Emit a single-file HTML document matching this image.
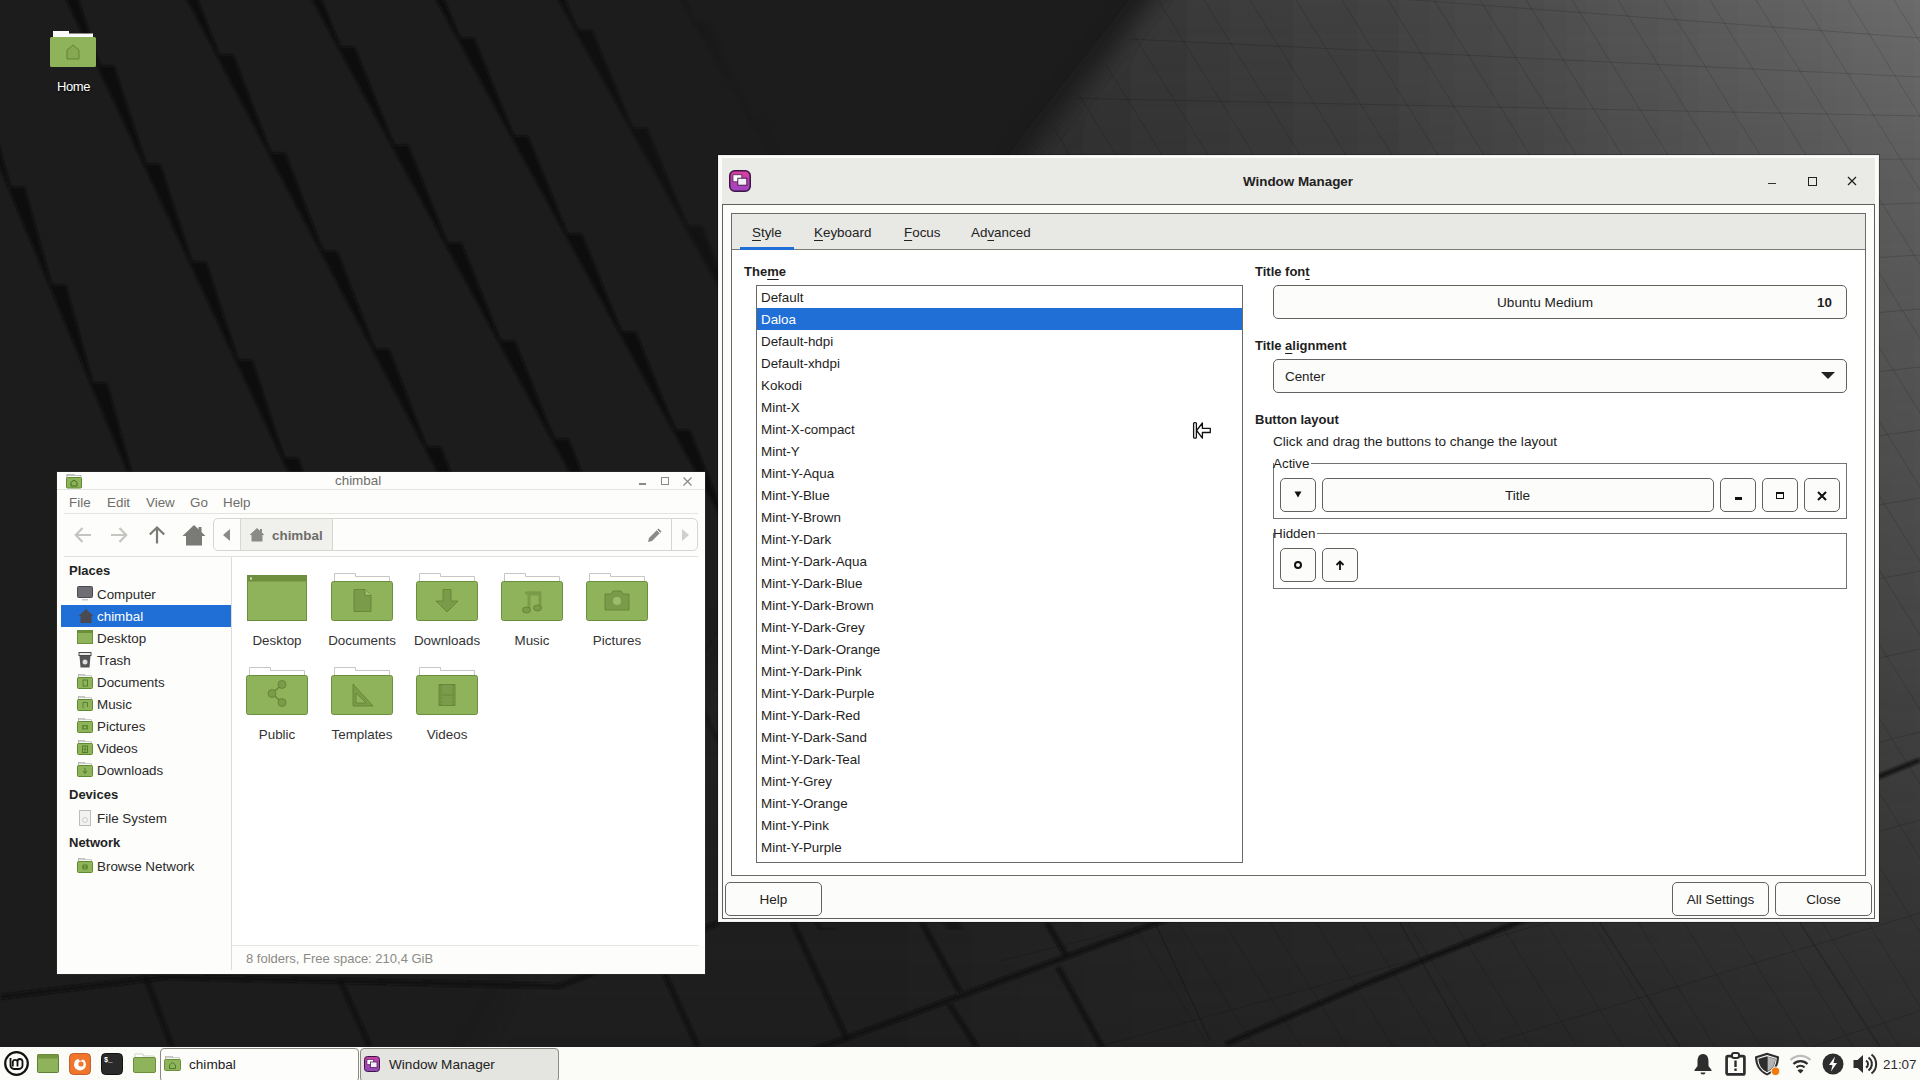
<!DOCTYPE html>
<html><head><meta charset="utf-8">
<style>
*{box-sizing:border-box;margin:0;padding:0}
html,body{width:1920px;height:1080px;overflow:hidden}
body{position:relative;background:#1c1c1c;font-family:"Liberation Sans",sans-serif;font-size:13.5px;color:#1e1e1e}
.a{position:absolute}
.t{position:absolute;white-space:nowrap;line-height:16px;margin-top:1px}
svg.i{position:absolute;overflow:visible}
#wall{position:absolute;left:0;top:0}
.btn{position:absolute;border:1px solid #62625e;border-radius:5px;background:#fcfcfa;text-align:center;line-height:34px;color:#222}
.lbl{font-weight:bold;font-size:13px}
.u{text-decoration:underline;text-decoration-thickness:1px;text-underline-offset:3px}
.row{position:absolute;left:757px;width:485px;height:22px;line-height:22px;padding-left:4px;padding-top:1px;font-size:13.4px}
.sel{background:#1f6fd6;color:#fff}
.frame{position:absolute;border:1px solid #72726e}
.sb{position:absolute;left:97px;font-size:13.4px;color:#2a2a2a;line-height:16px;margin-top:0.5px}
.sbh{position:absolute;left:69px;font-size:13px;font-weight:bold;color:#222;line-height:16px}
.fl{position:absolute;width:80px;text-align:center;font-size:13.4px;color:#333;line-height:16px;margin-top:1px}
</style></head><body>

<svg id="wall" width="1920" height="1080" viewBox="0 0 1920 1080">
<defs>
<linearGradient id="hg" gradientUnits="userSpaceOnUse" x1="900" y1="0" x2="1920" y2="0">
<stop offset="0" stop-color="#282828"/>
<stop offset="0.25" stop-color="#383838"/>
<stop offset="0.5" stop-color="#444444"/>
<stop offset="1" stop-color="#6c6c6c"/>
</linearGradient>
<linearGradient id="vg" gradientUnits="userSpaceOnUse" x1="0" y1="0" x2="0" y2="1047">
<stop offset="0" stop-color="#fff" stop-opacity="1"/>
<stop offset="0.15" stop-color="#fff" stop-opacity="0.85"/>
<stop offset="0.57" stop-color="#fff" stop-opacity="0.55"/>
<stop offset="0.95" stop-color="#fff" stop-opacity="0.25"/>
<stop offset="1" stop-color="#fff" stop-opacity="0.22"/>
</linearGradient>
<mask id="vm" maskUnits="userSpaceOnUse" x="0" y="0" width="1920" height="1080"><rect width="1920" height="1080" fill="url(#vg)"/></mask>
<filter id="bl" x="-5%" y="-5%" width="110%" height="110%"><feGaussianBlur stdDeviation="12"/></filter>
</defs>
<rect width="1920" height="1080" fill="#1c1c1c"/><filter id="pb"><feGaussianBlur stdDeviation="1"/></filter><linearGradient id="pfg" gradientUnits="userSpaceOnUse" x1="540" y1="0" x2="700" y2="-62"><stop offset="0" stop-color="#fff"/><stop offset="1" stop-color="#000"/></linearGradient><mask id="pm" maskUnits="userSpaceOnUse" x="0" y="0" width="1920" height="1080"><rect width="1920" height="930" fill="url(#pfg)"/></mask><g mask="url(#pm)"><g filter="url(#pb)"><polygon points="-155.1,-205 -140.1,-205 -112.9,-107 -113.9,-107" fill="#0d0d0d"/><line x1="-155.1" y1="-205" x2="-113.9" y2="-107" stroke="#0f0f0f" stroke-width="3"/><polygon points="-113.9,-107 -98.9,-107 -71.8,-9 -72.8,-9" fill="#0d0d0d"/><line x1="-113.9" y1="-107" x2="-72.8" y2="-9" stroke="#0f0f0f" stroke-width="3"/><polygon points="-72.8,-9 -57.8,-9 -30.6,89 -31.6,89" fill="#0d0d0d"/><line x1="-72.8" y1="-9" x2="-31.6" y2="89" stroke="#0f0f0f" stroke-width="3"/><polygon points="-31.6,89 -16.6,89 10.5,187 9.5,187" fill="#0d0d0d"/><line x1="-31.6" y1="89" x2="9.5" y2="187" stroke="#0f0f0f" stroke-width="3"/><polygon points="9.5,187 24.5,187 51.7,285 50.7,285" fill="#0d0d0d"/><line x1="9.5" y1="187" x2="50.7" y2="285" stroke="#0f0f0f" stroke-width="3"/><polygon points="50.7,285 65.7,285 92.9,383 91.9,383" fill="#0d0d0d"/><line x1="50.7" y1="285" x2="91.9" y2="383" stroke="#0f0f0f" stroke-width="3"/><polygon points="91.9,383 106.9,383 134.0,481 133.0,481" fill="#0d0d0d"/><line x1="91.9" y1="383" x2="133.0" y2="481" stroke="#0f0f0f" stroke-width="3"/><polygon points="133.0,481 148.0,481 175.2,579 174.2,579" fill="#0d0d0d"/><line x1="133.0" y1="481" x2="174.2" y2="579" stroke="#0f0f0f" stroke-width="3"/><polygon points="174.2,579 189.2,579 216.3,677 215.3,677" fill="#0d0d0d"/><line x1="174.2" y1="579" x2="215.3" y2="677" stroke="#0f0f0f" stroke-width="3"/><polygon points="215.3,677 230.3,677 257.5,775 256.5,775" fill="#0d0d0d"/><line x1="215.3" y1="677" x2="256.5" y2="775" stroke="#0f0f0f" stroke-width="3"/><polygon points="256.5,775 271.5,775 298.7,873 297.7,873" fill="#0d0d0d"/><line x1="256.5" y1="775" x2="297.7" y2="873" stroke="#0f0f0f" stroke-width="3"/><polygon points="297.7,873 312.7,873 339.8,971 338.8,971" fill="#0d0d0d"/><line x1="297.7" y1="873" x2="338.8" y2="971" stroke="#0f0f0f" stroke-width="3"/><polygon points="338.8,971 353.8,971 381.0,1069 380.0,1069" fill="#0d0d0d"/><line x1="338.8" y1="971" x2="380.0" y2="1069" stroke="#0f0f0f" stroke-width="3"/><polygon points="380.0,1069 395.0,1069 422.1,1167 421.1,1167" fill="#0d0d0d"/><line x1="380.0" y1="1069" x2="421.1" y2="1167" stroke="#0f0f0f" stroke-width="3"/><polygon points="-39.2,-228 -24.2,-228 7.9,-130 6.9,-130" fill="#0d0d0d"/><line x1="-39.2" y1="-228" x2="6.9" y2="-130" stroke="#0f0f0f" stroke-width="3"/><polygon points="6.9,-130 21.9,-130 54.0,-32 53.0,-32" fill="#0d0d0d"/><line x1="6.9" y1="-130" x2="53.0" y2="-32" stroke="#0f0f0f" stroke-width="3"/><polygon points="53.0,-32 68.0,-32 100.0,66 99.0,66" fill="#0d0d0d"/><line x1="53.0" y1="-32" x2="99.0" y2="66" stroke="#0f0f0f" stroke-width="3"/><polygon points="99.0,66 114.0,66 146.1,164 145.1,164" fill="#0d0d0d"/><line x1="99.0" y1="66" x2="145.1" y2="164" stroke="#0f0f0f" stroke-width="3"/><polygon points="145.1,164 160.1,164 192.1,262 191.1,262" fill="#0d0d0d"/><line x1="145.1" y1="164" x2="191.1" y2="262" stroke="#0f0f0f" stroke-width="3"/><polygon points="191.1,262 206.1,262 238.2,360 237.2,360" fill="#0d0d0d"/><line x1="191.1" y1="262" x2="237.2" y2="360" stroke="#0f0f0f" stroke-width="3"/><polygon points="237.2,360 252.2,360 284.3,458 283.3,458" fill="#0d0d0d"/><line x1="237.2" y1="360" x2="283.3" y2="458" stroke="#0f0f0f" stroke-width="3"/><polygon points="283.3,458 298.3,458 330.3,556 329.3,556" fill="#0d0d0d"/><line x1="283.3" y1="458" x2="329.3" y2="556" stroke="#0f0f0f" stroke-width="3"/><polygon points="329.3,556 344.3,556 376.4,654 375.4,654" fill="#0d0d0d"/><line x1="329.3" y1="556" x2="375.4" y2="654" stroke="#0f0f0f" stroke-width="3"/><polygon points="375.4,654 390.4,654 422.4,752 421.4,752" fill="#0d0d0d"/><line x1="375.4" y1="654" x2="421.4" y2="752" stroke="#0f0f0f" stroke-width="3"/><polygon points="421.4,752 436.4,752 468.5,850 467.5,850" fill="#0d0d0d"/><line x1="421.4" y1="752" x2="467.5" y2="850" stroke="#0f0f0f" stroke-width="3"/><polygon points="467.5,850 482.5,850 514.6,948 513.6,948" fill="#0d0d0d"/><line x1="467.5" y1="850" x2="513.6" y2="948" stroke="#0f0f0f" stroke-width="3"/><polygon points="513.6,948 528.6,948 560.6,1046 559.6,1046" fill="#0d0d0d"/><line x1="513.6" y1="948" x2="559.6" y2="1046" stroke="#0f0f0f" stroke-width="3"/><polygon points="559.6,1046 574.6,1046 606.7,1144 605.7,1144" fill="#0d0d0d"/><line x1="559.6" y1="1046" x2="605.7" y2="1144" stroke="#0f0f0f" stroke-width="3"/><polygon points="62.3,-239 77.3,-239 115.3,-141 114.3,-141" fill="#0d0d0d"/><line x1="62.3" y1="-239" x2="114.3" y2="-141" stroke="#0f0f0f" stroke-width="3"/><polygon points="114.3,-141 129.3,-141 167.2,-43 166.2,-43" fill="#0d0d0d"/><line x1="114.3" y1="-141" x2="166.2" y2="-43" stroke="#0f0f0f" stroke-width="3"/><polygon points="166.2,-43 181.2,-43 219.2,55 218.2,55" fill="#0d0d0d"/><line x1="166.2" y1="-43" x2="218.2" y2="55" stroke="#0f0f0f" stroke-width="3"/><polygon points="218.2,55 233.2,55 271.1,153 270.1,153" fill="#0d0d0d"/><line x1="218.2" y1="55" x2="270.1" y2="153" stroke="#0f0f0f" stroke-width="3"/><polygon points="270.1,153 285.1,153 323.0,251 322.0,251" fill="#0d0d0d"/><line x1="270.1" y1="153" x2="322.0" y2="251" stroke="#0f0f0f" stroke-width="3"/><polygon points="322.0,251 337.0,251 375.0,349 374.0,349" fill="#0d0d0d"/><line x1="322.0" y1="251" x2="374.0" y2="349" stroke="#0f0f0f" stroke-width="3"/><polygon points="374.0,349 389.0,349 426.9,447 425.9,447" fill="#0d0d0d"/><line x1="374.0" y1="349" x2="425.9" y2="447" stroke="#0f0f0f" stroke-width="3"/><polygon points="425.9,447 440.9,447 478.9,545 477.9,545" fill="#0d0d0d"/><line x1="425.9" y1="447" x2="477.9" y2="545" stroke="#0f0f0f" stroke-width="3"/><polygon points="477.9,545 492.9,545 530.8,643 529.8,643" fill="#0d0d0d"/><line x1="477.9" y1="545" x2="529.8" y2="643" stroke="#0f0f0f" stroke-width="3"/><polygon points="529.8,643 544.8,643 582.7,741 581.7,741" fill="#0d0d0d"/><line x1="529.8" y1="643" x2="581.7" y2="741" stroke="#0f0f0f" stroke-width="3"/><polygon points="581.7,741 596.7,741 634.7,839 633.7,839" fill="#0d0d0d"/><line x1="581.7" y1="741" x2="633.7" y2="839" stroke="#0f0f0f" stroke-width="3"/><polygon points="633.7,839 648.7,839 686.6,937 685.6,937" fill="#0d0d0d"/><line x1="633.7" y1="839" x2="685.6" y2="937" stroke="#0f0f0f" stroke-width="3"/><polygon points="685.6,937 700.6,937 738.6,1035 737.6,1035" fill="#0d0d0d"/><line x1="685.6" y1="937" x2="737.6" y2="1035" stroke="#0f0f0f" stroke-width="3"/><polygon points="737.6,1035 752.6,1035 790.5,1133 789.5,1133" fill="#0d0d0d"/><line x1="737.6" y1="1035" x2="789.5" y2="1133" stroke="#0f0f0f" stroke-width="3"/><polygon points="179.4,-247 194.4,-247 233.8,-149 232.8,-149" fill="#0d0d0d"/><line x1="179.4" y1="-247" x2="232.8" y2="-149" stroke="#0f0f0f" stroke-width="3"/><polygon points="232.8,-149 247.8,-149 287.2,-51 286.2,-51" fill="#0d0d0d"/><line x1="232.8" y1="-149" x2="286.2" y2="-51" stroke="#0f0f0f" stroke-width="3"/><polygon points="286.2,-51 301.2,-51 340.6,47 339.6,47" fill="#0d0d0d"/><line x1="286.2" y1="-51" x2="339.6" y2="47" stroke="#0f0f0f" stroke-width="3"/><polygon points="339.6,47 354.6,47 394.0,145 393.0,145" fill="#0d0d0d"/><line x1="339.6" y1="47" x2="393.0" y2="145" stroke="#0f0f0f" stroke-width="3"/><polygon points="393.0,145 408.0,145 447.4,243 446.4,243" fill="#0d0d0d"/><line x1="393.0" y1="145" x2="446.4" y2="243" stroke="#0f0f0f" stroke-width="3"/><polygon points="446.4,243 461.4,243 500.8,341 499.8,341" fill="#0d0d0d"/><line x1="446.4" y1="243" x2="499.8" y2="341" stroke="#0f0f0f" stroke-width="3"/><polygon points="499.8,341 514.8,341 554.3,439 553.3,439" fill="#0d0d0d"/><line x1="499.8" y1="341" x2="553.3" y2="439" stroke="#0f0f0f" stroke-width="3"/><polygon points="553.3,439 568.3,439 607.7,537 606.7,537" fill="#0d0d0d"/><line x1="553.3" y1="439" x2="606.7" y2="537" stroke="#0f0f0f" stroke-width="3"/><polygon points="606.7,537 621.7,537 661.1,635 660.1,635" fill="#0d0d0d"/><line x1="606.7" y1="537" x2="660.1" y2="635" stroke="#0f0f0f" stroke-width="3"/><polygon points="660.1,635 675.1,635 714.5,733 713.5,733" fill="#0d0d0d"/><line x1="660.1" y1="635" x2="713.5" y2="733" stroke="#0f0f0f" stroke-width="3"/><polygon points="713.5,733 728.5,733 767.9,831 766.9,831" fill="#0d0d0d"/><line x1="713.5" y1="733" x2="766.9" y2="831" stroke="#0f0f0f" stroke-width="3"/><polygon points="766.9,831 781.9,831 821.3,929 820.3,929" fill="#0d0d0d"/><line x1="766.9" y1="831" x2="820.3" y2="929" stroke="#0f0f0f" stroke-width="3"/><polygon points="820.3,929 835.3,929 874.7,1027 873.7,1027" fill="#0d0d0d"/><line x1="820.3" y1="929" x2="873.7" y2="1027" stroke="#0f0f0f" stroke-width="3"/><polygon points="873.7,1027 888.7,1027 928.1,1125 927.1,1125" fill="#0d0d0d"/><line x1="873.7" y1="1027" x2="927.1" y2="1125" stroke="#0f0f0f" stroke-width="3"/><polygon points="297.2,-256 312.2,-256 352.1,-158 351.1,-158" fill="#0d0d0d"/><line x1="297.2" y1="-256" x2="351.1" y2="-158" stroke="#0f0f0f" stroke-width="3"/><polygon points="351.1,-158 366.1,-158 406.0,-60 405.0,-60" fill="#0d0d0d"/><line x1="351.1" y1="-158" x2="405.0" y2="-60" stroke="#0f0f0f" stroke-width="3"/><polygon points="405.0,-60 420.0,-60 459.9,38 458.9,38" fill="#0d0d0d"/><line x1="405.0" y1="-60" x2="458.9" y2="38" stroke="#0f0f0f" stroke-width="3"/><polygon points="458.9,38 473.9,38 513.8,136 512.8,136" fill="#0d0d0d"/><line x1="458.9" y1="38" x2="512.8" y2="136" stroke="#0f0f0f" stroke-width="3"/><polygon points="512.8,136 527.8,136 567.7,234 566.7,234" fill="#0d0d0d"/><line x1="512.8" y1="136" x2="566.7" y2="234" stroke="#0f0f0f" stroke-width="3"/><polygon points="566.7,234 581.7,234 621.6,332 620.6,332" fill="#0d0d0d"/><line x1="566.7" y1="234" x2="620.6" y2="332" stroke="#0f0f0f" stroke-width="3"/><polygon points="620.6,332 635.6,332 675.5,430 674.5,430" fill="#0d0d0d"/><line x1="620.6" y1="332" x2="674.5" y2="430" stroke="#0f0f0f" stroke-width="3"/><polygon points="674.5,430 689.5,430 729.4,528 728.4,528" fill="#0d0d0d"/><line x1="674.5" y1="430" x2="728.4" y2="528" stroke="#0f0f0f" stroke-width="3"/><polygon points="728.4,528 743.4,528 783.3,626 782.3,626" fill="#0d0d0d"/><line x1="728.4" y1="528" x2="782.3" y2="626" stroke="#0f0f0f" stroke-width="3"/><polygon points="782.3,626 797.3,626 837.2,724 836.2,724" fill="#0d0d0d"/><line x1="782.3" y1="626" x2="836.2" y2="724" stroke="#0f0f0f" stroke-width="3"/><polygon points="836.2,724 851.2,724 891.1,822 890.1,822" fill="#0d0d0d"/><line x1="836.2" y1="724" x2="890.1" y2="822" stroke="#0f0f0f" stroke-width="3"/><polygon points="890.1,822 905.1,822 945.0,920 944.0,920" fill="#0d0d0d"/><line x1="890.1" y1="822" x2="944.0" y2="920" stroke="#0f0f0f" stroke-width="3"/><polygon points="944.0,920 959.0,920 998.9,1018 997.9,1018" fill="#0d0d0d"/><line x1="944.0" y1="920" x2="997.9" y2="1018" stroke="#0f0f0f" stroke-width="3"/><polygon points="997.9,1018 1012.9,1018 1052.8,1116 1051.8,1116" fill="#0d0d0d"/><line x1="997.9" y1="1018" x2="1051.8" y2="1116" stroke="#0f0f0f" stroke-width="3"/><polygon points="412.2,-264 427.2,-264 468.0,-166 467.0,-166" fill="#0d0d0d"/><line x1="412.2" y1="-264" x2="467.0" y2="-166" stroke="#0f0f0f" stroke-width="3"/><polygon points="467.0,-166 482.0,-166 522.9,-68 521.9,-68" fill="#0d0d0d"/><line x1="467.0" y1="-166" x2="521.9" y2="-68" stroke="#0f0f0f" stroke-width="3"/><polygon points="521.9,-68 536.9,-68 577.8,30 576.8,30" fill="#0d0d0d"/><line x1="521.9" y1="-68" x2="576.8" y2="30" stroke="#0f0f0f" stroke-width="3"/><polygon points="576.8,30 591.8,30 632.7,128 631.7,128" fill="#0d0d0d"/><line x1="576.8" y1="30" x2="631.7" y2="128" stroke="#0f0f0f" stroke-width="3"/><polygon points="631.7,128 646.7,128 687.6,226 686.6,226" fill="#0d0d0d"/><line x1="631.7" y1="128" x2="686.6" y2="226" stroke="#0f0f0f" stroke-width="3"/><polygon points="686.6,226 701.6,226 742.4,324 741.4,324" fill="#0d0d0d"/><line x1="686.6" y1="226" x2="741.4" y2="324" stroke="#0f0f0f" stroke-width="3"/><polygon points="741.4,324 756.4,324 797.3,422 796.3,422" fill="#0d0d0d"/><line x1="741.4" y1="324" x2="796.3" y2="422" stroke="#0f0f0f" stroke-width="3"/><polygon points="796.3,422 811.3,422 852.2,520 851.2,520" fill="#0d0d0d"/><line x1="796.3" y1="422" x2="851.2" y2="520" stroke="#0f0f0f" stroke-width="3"/><polygon points="851.2,520 866.2,520 907.1,618 906.1,618" fill="#0d0d0d"/><line x1="851.2" y1="520" x2="906.1" y2="618" stroke="#0f0f0f" stroke-width="3"/><polygon points="906.1,618 921.1,618 962.0,716 961.0,716" fill="#0d0d0d"/><line x1="906.1" y1="618" x2="961.0" y2="716" stroke="#0f0f0f" stroke-width="3"/><polygon points="961.0,716 976.0,716 1016.8,814 1015.8,814" fill="#0d0d0d"/><line x1="961.0" y1="716" x2="1015.8" y2="814" stroke="#0f0f0f" stroke-width="3"/><polygon points="1015.8,814 1030.8,814 1071.7,912 1070.7,912" fill="#0d0d0d"/><line x1="1015.8" y1="814" x2="1070.7" y2="912" stroke="#0f0f0f" stroke-width="3"/><polygon points="1070.7,912 1085.7,912 1126.6,1010 1125.6,1010" fill="#0d0d0d"/><line x1="1070.7" y1="912" x2="1125.6" y2="1010" stroke="#0f0f0f" stroke-width="3"/><polygon points="1125.6,1010 1140.6,1010 1181.5,1108 1180.5,1108" fill="#0d0d0d"/><line x1="1125.6" y1="1010" x2="1180.5" y2="1108" stroke="#0f0f0f" stroke-width="3"/><polygon points="524.2,-272 539.2,-272 582.1,-174 581.1,-174" fill="#0d0d0d"/><line x1="524.2" y1="-272" x2="581.1" y2="-174" stroke="#0f0f0f" stroke-width="3"/><polygon points="581.1,-174 596.1,-174 638.9,-76 637.9,-76" fill="#0d0d0d"/><line x1="581.1" y1="-174" x2="637.9" y2="-76" stroke="#0f0f0f" stroke-width="3"/><polygon points="637.9,-76 652.9,-76 695.8,22 694.8,22" fill="#0d0d0d"/><line x1="637.9" y1="-76" x2="694.8" y2="22" stroke="#0f0f0f" stroke-width="3"/><polygon points="694.8,22 709.8,22 752.6,120 751.6,120" fill="#0d0d0d"/><line x1="694.8" y1="22" x2="751.6" y2="120" stroke="#0f0f0f" stroke-width="3"/><polygon points="751.6,120 766.6,120 809.4,218 808.4,218" fill="#0d0d0d"/><line x1="751.6" y1="120" x2="808.4" y2="218" stroke="#0f0f0f" stroke-width="3"/><polygon points="808.4,218 823.4,218 866.3,316 865.3,316" fill="#0d0d0d"/><line x1="808.4" y1="218" x2="865.3" y2="316" stroke="#0f0f0f" stroke-width="3"/><polygon points="865.3,316 880.3,316 923.1,414 922.1,414" fill="#0d0d0d"/><line x1="865.3" y1="316" x2="922.1" y2="414" stroke="#0f0f0f" stroke-width="3"/><polygon points="922.1,414 937.1,414 980.0,512 979.0,512" fill="#0d0d0d"/><line x1="922.1" y1="414" x2="979.0" y2="512" stroke="#0f0f0f" stroke-width="3"/><polygon points="979.0,512 994.0,512 1036.8,610 1035.8,610" fill="#0d0d0d"/><line x1="979.0" y1="512" x2="1035.8" y2="610" stroke="#0f0f0f" stroke-width="3"/><polygon points="1035.8,610 1050.8,610 1093.6,708 1092.6,708" fill="#0d0d0d"/><line x1="1035.8" y1="610" x2="1092.6" y2="708" stroke="#0f0f0f" stroke-width="3"/><polygon points="1092.6,708 1107.6,708 1150.5,806 1149.5,806" fill="#0d0d0d"/><line x1="1092.6" y1="708" x2="1149.5" y2="806" stroke="#0f0f0f" stroke-width="3"/><polygon points="1149.5,806 1164.5,806 1207.3,904 1206.3,904" fill="#0d0d0d"/><line x1="1149.5" y1="806" x2="1206.3" y2="904" stroke="#0f0f0f" stroke-width="3"/><polygon points="1206.3,904 1221.3,904 1264.2,1002 1263.2,1002" fill="#0d0d0d"/><line x1="1206.3" y1="904" x2="1263.2" y2="1002" stroke="#0f0f0f" stroke-width="3"/><polygon points="1263.2,1002 1278.2,1002 1321.0,1100 1320.0,1100" fill="#0d0d0d"/><line x1="1263.2" y1="1002" x2="1320.0" y2="1100" stroke="#0f0f0f" stroke-width="3"/><polygon points="636.0,-280 651.0,-280 695.8,-182 694.8,-182" fill="#0d0d0d"/><line x1="636.0" y1="-280" x2="694.8" y2="-182" stroke="#0f0f0f" stroke-width="3"/><polygon points="694.8,-182 709.8,-182 754.6,-84 753.6,-84" fill="#0d0d0d"/><line x1="694.8" y1="-182" x2="753.6" y2="-84" stroke="#0f0f0f" stroke-width="3"/><polygon points="753.6,-84 768.6,-84 813.4,14 812.4,14" fill="#0d0d0d"/><line x1="753.6" y1="-84" x2="812.4" y2="14" stroke="#0f0f0f" stroke-width="3"/><polygon points="812.4,14 827.4,14 872.2,112 871.2,112" fill="#0d0d0d"/><line x1="812.4" y1="14" x2="871.2" y2="112" stroke="#0f0f0f" stroke-width="3"/><polygon points="871.2,112 886.2,112 931.0,210 930.0,210" fill="#0d0d0d"/><line x1="871.2" y1="112" x2="930.0" y2="210" stroke="#0f0f0f" stroke-width="3"/><polygon points="930.0,210 945.0,210 989.8,308 988.8,308" fill="#0d0d0d"/><line x1="930.0" y1="210" x2="988.8" y2="308" stroke="#0f0f0f" stroke-width="3"/><polygon points="988.8,308 1003.8,308 1048.6,406 1047.6,406" fill="#0d0d0d"/><line x1="988.8" y1="308" x2="1047.6" y2="406" stroke="#0f0f0f" stroke-width="3"/><polygon points="1047.6,406 1062.6,406 1107.4,504 1106.4,504" fill="#0d0d0d"/><line x1="1047.6" y1="406" x2="1106.4" y2="504" stroke="#0f0f0f" stroke-width="3"/><polygon points="1106.4,504 1121.4,504 1166.2,602 1165.2,602" fill="#0d0d0d"/><line x1="1106.4" y1="504" x2="1165.2" y2="602" stroke="#0f0f0f" stroke-width="3"/><polygon points="1165.2,602 1180.2,602 1225.0,700 1224.0,700" fill="#0d0d0d"/><line x1="1165.2" y1="602" x2="1224.0" y2="700" stroke="#0f0f0f" stroke-width="3"/><polygon points="1224.0,700 1239.0,700 1283.8,798 1282.8,798" fill="#0d0d0d"/><line x1="1224.0" y1="700" x2="1282.8" y2="798" stroke="#0f0f0f" stroke-width="3"/><polygon points="1282.8,798 1297.8,798 1342.6,896 1341.6,896" fill="#0d0d0d"/><line x1="1282.8" y1="798" x2="1341.6" y2="896" stroke="#0f0f0f" stroke-width="3"/><polygon points="1341.6,896 1356.6,896 1401.4,994 1400.4,994" fill="#0d0d0d"/><line x1="1341.6" y1="896" x2="1400.4" y2="994" stroke="#0f0f0f" stroke-width="3"/><polygon points="1400.4,994 1415.4,994 1460.2,1092 1459.2,1092" fill="#0d0d0d"/><line x1="1400.4" y1="994" x2="1459.2" y2="1092" stroke="#0f0f0f" stroke-width="3"/><polygon points="1459.2,1092 1474.2,1092 1519.0,1190 1518.0,1190" fill="#0d0d0d"/><line x1="1459.2" y1="1092" x2="1518.0" y2="1190" stroke="#0f0f0f" stroke-width="3"/><polygon points="747.4,-288 762.4,-288 809.2,-190 808.2,-190" fill="#0d0d0d"/><line x1="747.4" y1="-288" x2="808.2" y2="-190" stroke="#0f0f0f" stroke-width="3"/><polygon points="808.2,-190 823.2,-190 870.0,-92 869.0,-92" fill="#0d0d0d"/><line x1="808.2" y1="-190" x2="869.0" y2="-92" stroke="#0f0f0f" stroke-width="3"/><polygon points="869.0,-92 884.0,-92 930.7,6 929.7,6" fill="#0d0d0d"/><line x1="869.0" y1="-92" x2="929.7" y2="6" stroke="#0f0f0f" stroke-width="3"/><polygon points="929.7,6 944.7,6 991.5,104 990.5,104" fill="#0d0d0d"/><line x1="929.7" y1="6" x2="990.5" y2="104" stroke="#0f0f0f" stroke-width="3"/><polygon points="990.5,104 1005.5,104 1052.2,202 1051.2,202" fill="#0d0d0d"/><line x1="990.5" y1="104" x2="1051.2" y2="202" stroke="#0f0f0f" stroke-width="3"/><polygon points="1051.2,202 1066.2,202 1113.0,300 1112.0,300" fill="#0d0d0d"/><line x1="1051.2" y1="202" x2="1112.0" y2="300" stroke="#0f0f0f" stroke-width="3"/><polygon points="1112.0,300 1127.0,300 1173.8,398 1172.8,398" fill="#0d0d0d"/><line x1="1112.0" y1="300" x2="1172.8" y2="398" stroke="#0f0f0f" stroke-width="3"/><polygon points="1172.8,398 1187.8,398 1234.5,496 1233.5,496" fill="#0d0d0d"/><line x1="1172.8" y1="398" x2="1233.5" y2="496" stroke="#0f0f0f" stroke-width="3"/><polygon points="1233.5,496 1248.5,496 1295.3,594 1294.3,594" fill="#0d0d0d"/><line x1="1233.5" y1="496" x2="1294.3" y2="594" stroke="#0f0f0f" stroke-width="3"/><polygon points="1294.3,594 1309.3,594 1356.0,692 1355.0,692" fill="#0d0d0d"/><line x1="1294.3" y1="594" x2="1355.0" y2="692" stroke="#0f0f0f" stroke-width="3"/><polygon points="1355.0,692 1370.0,692 1416.8,790 1415.8,790" fill="#0d0d0d"/><line x1="1355.0" y1="692" x2="1415.8" y2="790" stroke="#0f0f0f" stroke-width="3"/><polygon points="1415.8,790 1430.8,790 1477.6,888 1476.6,888" fill="#0d0d0d"/><line x1="1415.8" y1="790" x2="1476.6" y2="888" stroke="#0f0f0f" stroke-width="3"/><polygon points="1476.6,888 1491.6,888 1538.3,986 1537.3,986" fill="#0d0d0d"/><line x1="1476.6" y1="888" x2="1537.3" y2="986" stroke="#0f0f0f" stroke-width="3"/><polygon points="1537.3,986 1552.3,986 1599.1,1084 1598.1,1084" fill="#0d0d0d"/><line x1="1537.3" y1="986" x2="1598.1" y2="1084" stroke="#0f0f0f" stroke-width="3"/><polygon points="1598.1,1084 1613.1,1084 1659.8,1182 1658.8,1182" fill="#0d0d0d"/><line x1="1598.1" y1="1084" x2="1658.8" y2="1182" stroke="#0f0f0f" stroke-width="3"/><polygon points="921.3,-198 936.3,-198 985.0,-100 984.0,-100" fill="#0d0d0d"/><line x1="921.3" y1="-198" x2="984.0" y2="-100" stroke="#0f0f0f" stroke-width="3"/><polygon points="984.0,-100 999.0,-100 1047.7,-2 1046.7,-2" fill="#0d0d0d"/><line x1="984.0" y1="-100" x2="1046.7" y2="-2" stroke="#0f0f0f" stroke-width="3"/><polygon points="1046.7,-2 1061.7,-2 1110.4,96 1109.4,96" fill="#0d0d0d"/><line x1="1046.7" y1="-2" x2="1109.4" y2="96" stroke="#0f0f0f" stroke-width="3"/><polygon points="1109.4,96 1124.4,96 1173.2,194 1172.2,194" fill="#0d0d0d"/><line x1="1109.4" y1="96" x2="1172.2" y2="194" stroke="#0f0f0f" stroke-width="3"/><polygon points="1172.2,194 1187.2,194 1235.9,292 1234.9,292" fill="#0d0d0d"/><line x1="1172.2" y1="194" x2="1234.9" y2="292" stroke="#0f0f0f" stroke-width="3"/><polygon points="1234.9,292 1249.9,292 1298.6,390 1297.6,390" fill="#0d0d0d"/><line x1="1234.9" y1="292" x2="1297.6" y2="390" stroke="#0f0f0f" stroke-width="3"/><polygon points="1297.6,390 1312.6,390 1361.3,488 1360.3,488" fill="#0d0d0d"/><line x1="1297.6" y1="390" x2="1360.3" y2="488" stroke="#0f0f0f" stroke-width="3"/><polygon points="1360.3,488 1375.3,488 1424.0,586 1423.0,586" fill="#0d0d0d"/><line x1="1360.3" y1="488" x2="1423.0" y2="586" stroke="#0f0f0f" stroke-width="3"/><polygon points="1423.0,586 1438.0,586 1486.8,684 1485.8,684" fill="#0d0d0d"/><line x1="1423.0" y1="586" x2="1485.8" y2="684" stroke="#0f0f0f" stroke-width="3"/><polygon points="1485.8,684 1500.8,684 1549.5,782 1548.5,782" fill="#0d0d0d"/><line x1="1485.8" y1="684" x2="1548.5" y2="782" stroke="#0f0f0f" stroke-width="3"/><polygon points="1548.5,782 1563.5,782 1612.2,880 1611.2,880" fill="#0d0d0d"/><line x1="1548.5" y1="782" x2="1611.2" y2="880" stroke="#0f0f0f" stroke-width="3"/><polygon points="1611.2,880 1626.2,880 1674.9,978 1673.9,978" fill="#0d0d0d"/><line x1="1611.2" y1="880" x2="1673.9" y2="978" stroke="#0f0f0f" stroke-width="3"/><polygon points="1673.9,978 1688.9,978 1737.6,1076 1736.6,1076" fill="#0d0d0d"/><line x1="1673.9" y1="978" x2="1736.6" y2="1076" stroke="#0f0f0f" stroke-width="3"/><polygon points="1736.6,1076 1751.6,1076 1800.4,1174 1799.4,1174" fill="#0d0d0d"/><line x1="1736.6" y1="1076" x2="1799.4" y2="1174" stroke="#0f0f0f" stroke-width="3"/><polygon points="1034.0,-206 1049.0,-206 1099.7,-108 1098.7,-108" fill="#0d0d0d"/><line x1="1034.0" y1="-206" x2="1098.7" y2="-108" stroke="#0f0f0f" stroke-width="3"/><polygon points="1098.7,-108 1113.7,-108 1164.4,-10 1163.4,-10" fill="#0d0d0d"/><line x1="1098.7" y1="-108" x2="1163.4" y2="-10" stroke="#0f0f0f" stroke-width="3"/><polygon points="1163.4,-10 1178.4,-10 1229.1,88 1228.1,88" fill="#0d0d0d"/><line x1="1163.4" y1="-10" x2="1228.1" y2="88" stroke="#0f0f0f" stroke-width="3"/><polygon points="1228.1,88 1243.1,88 1293.8,186 1292.8,186" fill="#0d0d0d"/><line x1="1228.1" y1="88" x2="1292.8" y2="186" stroke="#0f0f0f" stroke-width="3"/><polygon points="1292.8,186 1307.8,186 1358.4,284 1357.4,284" fill="#0d0d0d"/><line x1="1292.8" y1="186" x2="1357.4" y2="284" stroke="#0f0f0f" stroke-width="3"/><polygon points="1357.4,284 1372.4,284 1423.1,382 1422.1,382" fill="#0d0d0d"/><line x1="1357.4" y1="284" x2="1422.1" y2="382" stroke="#0f0f0f" stroke-width="3"/><polygon points="1422.1,382 1437.1,382 1487.8,480 1486.8,480" fill="#0d0d0d"/><line x1="1422.1" y1="382" x2="1486.8" y2="480" stroke="#0f0f0f" stroke-width="3"/><polygon points="1486.8,480 1501.8,480 1552.5,578 1551.5,578" fill="#0d0d0d"/><line x1="1486.8" y1="480" x2="1551.5" y2="578" stroke="#0f0f0f" stroke-width="3"/><polygon points="1551.5,578 1566.5,578 1617.2,676 1616.2,676" fill="#0d0d0d"/><line x1="1551.5" y1="578" x2="1616.2" y2="676" stroke="#0f0f0f" stroke-width="3"/><polygon points="1616.2,676 1631.2,676 1681.8,774 1680.8,774" fill="#0d0d0d"/><line x1="1616.2" y1="676" x2="1680.8" y2="774" stroke="#0f0f0f" stroke-width="3"/><polygon points="1680.8,774 1695.8,774 1746.5,872 1745.5,872" fill="#0d0d0d"/><line x1="1680.8" y1="774" x2="1745.5" y2="872" stroke="#0f0f0f" stroke-width="3"/><polygon points="1745.5,872 1760.5,872 1811.2,970 1810.2,970" fill="#0d0d0d"/><line x1="1745.5" y1="872" x2="1810.2" y2="970" stroke="#0f0f0f" stroke-width="3"/><polygon points="1810.2,970 1825.2,970 1875.9,1068 1874.9,1068" fill="#0d0d0d"/><line x1="1810.2" y1="970" x2="1874.9" y2="1068" stroke="#0f0f0f" stroke-width="3"/><polygon points="1874.9,1068 1889.9,1068 1940.6,1166 1939.6,1166" fill="#0d0d0d"/><line x1="1874.9" y1="1068" x2="1939.6" y2="1166" stroke="#0f0f0f" stroke-width="3"/></g></g>
<g mask="url(#vm)"><polygon points="1185,-40 1990,-40 1990,1100 448,1100 1029,155" fill="url(#hg)" filter="url(#bl)"/></g><g filter="url(#pb)" stroke="#0e0e0e" stroke-width="5" stroke-opacity="0.85"><line x1="560" y1="986" x2="718" y2="923"/><line x1="847" y1="1038" x2="1152" y2="925"/><line x1="1152" y1="925" x2="1300" y2="870"/><line x1="700" y1="1090" x2="847" y2="1038"/><line x1="1226" y1="1044" x2="1360" y2="986"/><line x1="1360" y1="986" x2="1920" y2="760"/><line x1="0" y1="997" x2="165" y2="977"/><line x1="165" y1="977" x2="560" y2="986"/><line x1="793" y1="923" x2="847.5" y2="1040"/><line x1="922" y1="923" x2="960" y2="992"/><line x1="949" y1="1004" x2="977" y2="1047"/><line x1="1047" y1="923" x2="1066" y2="955"/><line x1="1058" y1="967" x2="1102" y2="1047"/><line x1="664" y1="973" x2="698" y2="1047"/><line x1="145" y1="975" x2="172" y2="1047"/><line x1="340" y1="980" x2="370" y2="1047"/></g><g stroke="#000" stroke-opacity="0.2" stroke-width="1.5"><line x1="1156" y1="925" x2="1210" y2="1040"/><line x1="1400" y1="923" x2="1470" y2="1047"/><line x1="1600" y1="923" x2="1680" y2="1047"/><line x1="1800" y1="923" x2="1880" y2="1047"/></g><clipPath id="lc"><polygon points="1160,0 1920,0 1920,1047 448,1047 1029,155"/></clipPath><g clip-path="url(#lc)" stroke="#000" stroke-opacity="0.15" stroke-width="1"><line x1="1000" y1="-75.6" x2="1920" y2="-2.0"/><line x1="1000" y1="-31.0" x2="1920" y2="38.0"/><line x1="1000" y1="32.8" x2="1920" y2="77.0"/><line x1="1000" y1="96.7" x2="1920" y2="116.0"/><line x1="1000" y1="164.5" x2="1920" y2="159.0"/><line x1="1000" y1="233.4" x2="1920" y2="203.0"/><line x1="1000" y1="310.2" x2="1920" y2="255.0"/><line x1="1000" y1="389.0" x2="1920" y2="309.0"/><line x1="1000" y1="471.9" x2="1920" y2="367.0"/><line x1="1000" y1="559.7" x2="1920" y2="430.0"/><line x1="1000" y1="652.6" x2="1920" y2="498.0"/><line x1="1000" y1="750.4" x2="1920" y2="571.0"/><line x1="1000" y1="853.2" x2="1920" y2="649.0"/><line x1="1000" y1="961.1" x2="1920" y2="732.0"/><line x1="1000" y1="1073.9" x2="1920" y2="820.0"/><line x1="1000" y1="1191.8" x2="1920" y2="913.0"/><line x1="1000" y1="1314.6" x2="1920" y2="1011.0"/><line x1="1000" y1="1442.4" x2="1920" y2="1114.0"/><line x1="560" y1="0" x2="1242.0" y2="1100"/><line x1="606" y1="0" x2="1288.0" y2="1100"/><line x1="652" y1="0" x2="1334.0" y2="1100"/><line x1="698" y1="0" x2="1380.0" y2="1100"/><line x1="744" y1="0" x2="1426.0" y2="1100"/><line x1="790" y1="0" x2="1472.0" y2="1100"/><line x1="836" y1="0" x2="1518.0" y2="1100"/><line x1="882" y1="0" x2="1564.0" y2="1100"/><line x1="928" y1="0" x2="1610.0" y2="1100"/><line x1="974" y1="0" x2="1656.0" y2="1100"/><line x1="1020" y1="0" x2="1702.0" y2="1100"/><line x1="1066" y1="0" x2="1748.0" y2="1100"/><line x1="1112" y1="0" x2="1794.0" y2="1100"/><line x1="1158" y1="0" x2="1840.0" y2="1100"/><line x1="1204" y1="0" x2="1886.0" y2="1100"/><line x1="1250" y1="0" x2="1932.0" y2="1100"/><line x1="1296" y1="0" x2="1978.0" y2="1100"/><line x1="1342" y1="0" x2="2024.0" y2="1100"/><line x1="1388" y1="0" x2="2070.0" y2="1100"/><line x1="1434" y1="0" x2="2116.0" y2="1100"/><line x1="1480" y1="0" x2="2162.0" y2="1100"/><line x1="1526" y1="0" x2="2208.0" y2="1100"/><line x1="1572" y1="0" x2="2254.0" y2="1100"/><line x1="1618" y1="0" x2="2300.0" y2="1100"/><line x1="1664" y1="0" x2="2346.0" y2="1100"/><line x1="1710" y1="0" x2="2392.0" y2="1100"/><line x1="1756" y1="0" x2="2438.0" y2="1100"/><line x1="1802" y1="0" x2="2484.0" y2="1100"/><line x1="1848" y1="0" x2="2530.0" y2="1100"/><line x1="1894" y1="0" x2="2576.0" y2="1100"/></g>
</svg>
<!-- Home desktop icon -->
<svg class="i" style="left:50px;top:30px" width="46" height="38" viewBox="0 0 46 38">
<rect x="3" y="1" width="16" height="4" fill="#fafafa"/>
<rect x="3" y="3.5" width="40" height="4" fill="#fafafa"/>
<rect x="0" y="7" width="46" height="30" rx="1.5" fill="#8fb35a"/>
<path d="M17 29 V20 L23 15 L29 20 V29 Z" fill="#86a853" stroke="#5f8532" stroke-width="1"/>
</svg>
<div class="t" style="left:57px;top:78px;color:#fff;font-size:13px;letter-spacing:-0.4px;text-shadow:0 1px 2px #000">Home</div>

<!-- ============ File manager ============ -->
<div class="a" style="left:56px;top:471px;width:650px;height:504px;background:#3a3a3a;opacity:.35"></div>
<div class="a" style="left:57px;top:472px;width:648px;height:502px;background:#fdfdfb"></div>
<div class="a" style="left:57px;top:489px;width:648px;height:1px;background:#e4e4e0"></div>
<div class="a" style="left:64px;top:513px;width:634px;height:1px;background:#e4e4e0"></div>
<div class="a" style="left:64px;top:556px;width:634px;height:1px;background:#e0e0dc"></div>
<div class="a" style="left:231px;top:557px;width:1px;height:413px;background:#dcdcd8"></div>
<div class="a" style="left:232px;top:557px;width:473px;height:388px;background:#fff"></div>
<div class="a" style="left:232px;top:945px;width:466px;height:1px;background:#e4e4e0"></div>
<!-- title -->
<svg class="i" style="left:66px;top:474px" width="16" height="15" viewBox="0 0 16 15">
<rect x="1" y="0.5" width="7" height="3" fill="#fff" stroke="#9a9a96" stroke-width=".6"/>
<rect x="1" y="1.5" width="14" height="3" fill="#fff" stroke="#9a9a96" stroke-width=".6"/>
<rect x="0.5" y="3.5" width="15" height="10.5" rx="1" fill="#8fb35a" stroke="#5e8a30" stroke-width="1"/>
<path d="M5 12 V8.5 L8 6 L11 8.5 V12 Z" fill="none" stroke="#3f6a1e" stroke-width="1"/>
</svg>
<div class="t" style="left:335px;top:472px;color:#6e6e6a;font-size:13.4px">chimbal</div>
<div class="a" style="left:639px;top:483px;width:7px;height:2px;background:#8a8a86"></div>
<div class="a" style="left:661px;top:477px;width:8px;height:8px;border:1px solid #8a8a86"></div>
<svg class="i" style="left:683px;top:477px" width="9" height="9" viewBox="0 0 9 9"><path d="M0.5 0.5 L8.5 8.5 M8.5 0.5 L0.5 8.5" stroke="#8a8a86" stroke-width="1.2"/></svg>
<!-- menubar -->
<div class="t" style="left:69px;top:494px;color:#6e6e6a;font-size:13.4px">File</div>
<div class="t" style="left:107px;top:494px;color:#6e6e6a;font-size:13.4px">Edit</div>
<div class="t" style="left:146px;top:494px;color:#6e6e6a;font-size:13.4px">View</div>
<div class="t" style="left:190px;top:494px;color:#6e6e6a;font-size:13.4px">Go</div>
<div class="t" style="left:223px;top:494px;color:#6e6e6a;font-size:13.4px">Help</div>
<!-- toolbar -->
<svg class="i" style="left:74px;top:526px" width="18" height="18" viewBox="0 0 18 18"><path d="M17 9 H2 M8.5 2 L1.8 9 L8.5 16" fill="none" stroke="#c4c4c0" stroke-width="2.2"/></svg>
<svg class="i" style="left:110px;top:526px" width="18" height="18" viewBox="0 0 18 18"><path d="M1 9 H16 M9.5 2 L16.2 9 L9.5 16" fill="none" stroke="#c4c4c0" stroke-width="2.2"/></svg>
<svg class="i" style="left:148px;top:526px" width="18" height="18" viewBox="0 0 18 18"><path d="M9 17.5 V2 M1.8 8.5 L9 1.5 L16.2 8.5" fill="none" stroke="#7a7a76" stroke-width="2.2"/></svg>
<svg class="i" style="left:182px;top:524px" width="24" height="22" viewBox="0 0 24 22"><path d="M0.5 12 L12 1 L23.5 12 H20 V21.5 H4 V12 Z" fill="#7a7a76"/><rect x="16.5" y="3" width="3" height="6" fill="#7a7a76"/></svg>
<div class="a" style="left:213px;top:518px;width:485px;height:33px;border:1px solid #d6d6d2;border-radius:5px;background:#fdfdfb"></div>
<div class="a" style="left:240px;top:519px;width:93px;height:31px;background:#f0f0ed;border-left:1px solid #d6d6d2;border-right:1px solid #d6d6d2"></div>
<svg class="i" style="left:223px;top:529px" width="8" height="12" viewBox="0 0 8 12"><path d="M7 0 V12 L0 6 Z" fill="#8a8a86"/></svg>
<svg class="i" style="left:249px;top:527px" width="16" height="15" viewBox="0 0 16 15"><path d="M0.5 8 L8 1 L15.5 8 H13.5 V14.5 H2.5 V8 Z" fill="#8a8a86"/><rect x="11" y="2" width="2" height="4" fill="#8a8a86"/></svg>
<div class="t" style="left:272px;top:527px;color:#6e6e6a;font-size:13.4px;font-weight:bold">chimbal</div>
<svg class="i" style="left:647px;top:527px" width="16" height="16" viewBox="0 0 16 16"><path d="M1 15 L2 11 L11.5 1.5 L14.5 4.5 L5 14 Z" fill="#8a8a86"/><path d="M10 3 L13 6" stroke="#fdfdfb" stroke-width="1"/></svg>
<div class="a" style="left:671px;top:519px;width:1px;height:31px;background:#d6d6d2"></div>
<svg class="i" style="left:681px;top:529px" width="8" height="12" viewBox="0 0 8 12"><path d="M1 0 V12 L8 6 Z" fill="#cfcfcb"/></svg>
<!-- sidebar -->
<div class="sbh" style="top:563px">Places</div>
<div class="a" style="left:61px;top:605px;width:170px;height:22px;background:#1f6fd6"></div>
<svg class="i" style="left:77px;top:586px" width="16" height="16" viewBox="0 0 16 16"><rect x="0.5" y="0.5" width="15" height="11" rx="1" fill="#6e6e74" stroke="#4a4a50"/><rect x="5" y="13" width="6" height="1.5" fill="#c8c8c8"/></svg>
<div class="sb" style="top:586px">Computer</div>
<svg class="i" style="left:78px;top:608px" width="16" height="16" viewBox="0 0 16 16"><path d="M0.5 8 L8 1 L15.5 8 H13.5 V15 H2.5 V8 Z" fill="#4a4a50"/></svg>
<div class="sb" style="top:608px;color:#fff">chimbal</div>
<svg class="i" style="left:77px;top:630px" width="16" height="14" viewBox="0 0 16 14"><rect x="0.5" y="0.5" width="15" height="13" fill="#8fb35a" stroke="#6b8f3b"/><rect x="0.5" y="0.5" width="15" height="2.5" fill="#6b8f3b"/></svg>
<div class="sb" style="top:630px">Desktop</div>
<svg class="i" style="left:78px;top:652px" width="14" height="16" viewBox="0 0 14 16"><rect x="1" y="0.5" width="12" height="3" fill="#e8e8e8" stroke="#4a4a4a"/><path d="M1.5 4 H12.5 L11.5 15.5 H2.5 Z" fill="#555"/><circle cx="7" cy="10" r="2.5" fill="#ddd"/></svg>
<div class="sb" style="top:652px">Trash</div>

<svg class="i" style="left:77px;top:674px" width="16" height="15" viewBox="0 0 16 15"><rect x="1.5" y="0.5" width="6" height="3" fill="#fff" stroke="#a0a09c" stroke-width=".6"/><rect x="1.5" y="1.8" width="13" height="3" fill="#fff" stroke="#a0a09c" stroke-width=".6"/><rect x="0.5" y="3.5" width="15" height="11" rx="1" fill="#8fb35a" stroke="#5e8a30" stroke-width="1"/><rect x="6" y="6" width="4.5" height="6" fill="none" stroke="#4f7a25" stroke-width=".9"/></svg>
<div class="sb" style="top:674px">Documents</div>
<svg class="i" style="left:77px;top:696px" width="16" height="15" viewBox="0 0 16 15"><rect x="1.5" y="0.5" width="6" height="3" fill="#fff" stroke="#a0a09c" stroke-width=".6"/><rect x="1.5" y="1.8" width="13" height="3" fill="#fff" stroke="#a0a09c" stroke-width=".6"/><rect x="0.5" y="3.5" width="15" height="11" rx="1" fill="#8fb35a" stroke="#5e8a30" stroke-width="1"/><path d="M6 12 V6.5 H10.5 V11" fill="none" stroke="#4f7a25" stroke-width=".9"/></svg>
<div class="sb" style="top:696px">Music</div>
<svg class="i" style="left:77px;top:718px" width="16" height="15" viewBox="0 0 16 15"><rect x="1.5" y="0.5" width="6" height="3" fill="#fff" stroke="#a0a09c" stroke-width=".6"/><rect x="1.5" y="1.8" width="13" height="3" fill="#fff" stroke="#a0a09c" stroke-width=".6"/><rect x="0.5" y="3.5" width="15" height="11" rx="1" fill="#8fb35a" stroke="#5e8a30" stroke-width="1"/><rect x="5" y="7" width="6" height="4.5" fill="#5e8a30"/><circle cx="8" cy="9.2" r="1.2" fill="#8fb35a"/></svg>
<div class="sb" style="top:718px">Pictures</div>
<svg class="i" style="left:77px;top:740px" width="16" height="15" viewBox="0 0 16 15"><rect x="1.5" y="0.5" width="6" height="3" fill="#fff" stroke="#a0a09c" stroke-width=".6"/><rect x="1.5" y="1.8" width="13" height="3" fill="#fff" stroke="#a0a09c" stroke-width=".6"/><rect x="0.5" y="3.5" width="15" height="11" rx="1" fill="#8fb35a" stroke="#5e8a30" stroke-width="1"/><rect x="5.5" y="6" width="5" height="6.5" fill="none" stroke="#4f7a25" stroke-width=".9"/><path d="M5.5 9.2 H10.5 M8 6 V12.5" stroke="#4f7a25" stroke-width=".7"/></svg>
<div class="sb" style="top:740px">Videos</div>
<svg class="i" style="left:77px;top:762px" width="16" height="15" viewBox="0 0 16 15"><rect x="1.5" y="0.5" width="6" height="3" fill="#fff" stroke="#a0a09c" stroke-width=".6"/><rect x="1.5" y="1.8" width="13" height="3" fill="#fff" stroke="#a0a09c" stroke-width=".6"/><rect x="0.5" y="3.5" width="15" height="11" rx="1" fill="#8fb35a" stroke="#5e8a30" stroke-width="1"/><path d="M8 6 V11 M6 9 L8 11.5 L10 9" fill="none" stroke="#4f7a25" stroke-width="1"/></svg>
<div class="sb" style="top:762px">Downloads</div>
<div class="sbh" style="top:787px">Devices</div>
<svg class="i" style="left:79px;top:810px" width="12" height="16" viewBox="0 0 12 16"><rect x="0.5" y="0.5" width="11" height="15" fill="#f2f2f0" stroke="#bdbdb9"/><circle cx="6" cy="10" r="2.5" fill="none" stroke="#cfcfcb"/></svg>
<div class="sb" style="top:810px">File System</div>
<div class="sbh" style="top:835px">Network</div>
<svg class="i" style="left:77px;top:858px" width="16" height="15" viewBox="0 0 16 15"><rect x="1.5" y="0.5" width="6" height="3" fill="#fff" stroke="#a0a09c" stroke-width=".6"/><rect x="1.5" y="1.8" width="13" height="3" fill="#fff" stroke="#a0a09c" stroke-width=".6"/><rect x="0.5" y="3.5" width="15" height="11" rx="1" fill="#8fb35a" stroke="#5e8a30" stroke-width="1"/><circle cx="8" cy="9" r="3" fill="#5e8a30"/><path d="M8 6 V12" stroke="#8fb35a" stroke-width=".8"/></svg>
<div class="sb" style="top:858px">Browse Network</div>
<svg class="i" style="left:247px;top:575px" width="60" height="46" viewBox="0 0 60 46"><rect x="0.5" y="0.5" width="59" height="45" fill="#8fb35a" stroke="#6b8f3b"/><rect x="0.5" y="0.5" width="59" height="6" fill="#6d8f3e"/><rect x="3" y="2.5" width="2" height="2" fill="#d6e4c0"/></svg>
<div class="fl" style="left:237px;top:632px">Desktop</div>
<svg class="i" style="left:331px;top:572px" width="62" height="49" viewBox="0 0 62 49"><path d="M3.5 9 V1.5 H24.5 V4.5 H58.5 V9" fill="#fff" stroke="#c6c6c2" stroke-width="1"/><rect x="0.5" y="9.5" width="61" height="39" rx="2" fill="#8fb35a" stroke="#6b8f3b" stroke-width="1"/><path d="M23 17.5 H34 L40 23.5 V39.5 H23 Z" fill="#7a9c4a" stroke="#5e8232" stroke-width=".8"/><path d="M34 17.5 V23.5 H40" fill="#9dbd6b" stroke="#5e8232" stroke-width=".8"/></svg>
<div class="fl" style="left:322px;top:632px">Documents</div>
<svg class="i" style="left:416px;top:572px" width="62" height="49" viewBox="0 0 62 49"><path d="M3.5 9 V1.5 H24.5 V4.5 H58.5 V9" fill="#fff" stroke="#c6c6c2" stroke-width="1"/><rect x="0.5" y="9.5" width="61" height="39" rx="2" fill="#8fb35a" stroke="#6b8f3b" stroke-width="1"/><path d="M27 17.5 H35 V29 H42 L31 40 L20 29 H27 Z" fill="#7a9c4a" stroke="#5e8232" stroke-width=".8"/></svg>
<div class="fl" style="left:407px;top:632px">Downloads</div>
<svg class="i" style="left:501px;top:572px" width="62" height="49" viewBox="0 0 62 49"><path d="M3.5 9 V1.5 H24.5 V4.5 H58.5 V9" fill="#fff" stroke="#c6c6c2" stroke-width="1"/><rect x="0.5" y="9.5" width="61" height="39" rx="2" fill="#8fb35a" stroke="#6b8f3b" stroke-width="1"/><path d="M24 21 H39 V36 M28 21 V38" fill="none" stroke="#7a9c4a" stroke-width="3"/><rect x="26.5" y="19.5" width="13" height="4" fill="#7a9c4a"/><ellipse cx="25.5" cy="38" rx="4" ry="3" fill="#7a9c4a" stroke="#5e8232" stroke-width=".8"/><ellipse cx="36.5" cy="36" rx="4" ry="3" fill="#7a9c4a" stroke="#5e8232" stroke-width=".8"/></svg>
<div class="fl" style="left:492px;top:632px">Music</div>
<svg class="i" style="left:586px;top:572px" width="62" height="49" viewBox="0 0 62 49"><path d="M3.5 9 V1.5 H24.5 V4.5 H58.5 V9" fill="#fff" stroke="#c6c6c2" stroke-width="1"/><rect x="0.5" y="9.5" width="61" height="39" rx="2" fill="#8fb35a" stroke="#6b8f3b" stroke-width="1"/><path d="M19 22 H25 L27 19 H35 L37 22 H43 V38 H19 Z" fill="#7a9c4a" stroke="#5e8232" stroke-width=".8"/><circle cx="31" cy="29" r="4" fill="#9dbd6b"/></svg>
<div class="fl" style="left:577px;top:632px">Pictures</div>
<svg class="i" style="left:246px;top:666px" width="62" height="49" viewBox="0 0 62 49"><path d="M3.5 9 V1.5 H24.5 V4.5 H58.5 V9" fill="#fff" stroke="#c6c6c2" stroke-width="1"/><rect x="0.5" y="9.5" width="61" height="39" rx="2" fill="#8fb35a" stroke="#6b8f3b" stroke-width="1"/><path d="M36 18.5 L26 27.5 L36 36.5" fill="none" stroke="#5e8232" stroke-width="1.2"/><circle cx="36" cy="18.5" r="4" fill="#7a9c4a" stroke="#5e8232" stroke-width=".8"/><circle cx="26" cy="27.5" r="4" fill="#7a9c4a" stroke="#5e8232" stroke-width=".8"/><circle cx="36" cy="36.5" r="4" fill="#7a9c4a" stroke="#5e8232" stroke-width=".8"/></svg>
<div class="fl" style="left:237px;top:726px">Public</div>
<svg class="i" style="left:331px;top:666px" width="62" height="49" viewBox="0 0 62 49"><path d="M3.5 9 V1.5 H24.5 V4.5 H58.5 V9" fill="#fff" stroke="#c6c6c2" stroke-width="1"/><rect x="0.5" y="9.5" width="61" height="39" rx="2" fill="#8fb35a" stroke="#6b8f3b" stroke-width="1"/><path d="M22 18 V40 H42 Z" fill="#7a9c4a" stroke="#5e8232" stroke-width=".8"/><path d="M25 27 V37 H35 Z" fill="#8fb35a" stroke="#5e8232" stroke-width=".8"/></svg>
<div class="fl" style="left:322px;top:726px">Templates</div>
<svg class="i" style="left:416px;top:666px" width="62" height="49" viewBox="0 0 62 49"><path d="M3.5 9 V1.5 H24.5 V4.5 H58.5 V9" fill="#fff" stroke="#c6c6c2" stroke-width="1"/><rect x="0.5" y="9.5" width="61" height="39" rx="2" fill="#8fb35a" stroke="#6b8f3b" stroke-width="1"/><rect x="23" y="18.5" width="16" height="21" fill="#7a9c4a" stroke="#5e8232" stroke-width=".8"/><path d="M25 19 V39 M37 19 V39" stroke="#5e8232" stroke-width="1.2" stroke-dasharray="1.2 1.2"/><path d="M26.5 29 H35.5" stroke="#5e8232" stroke-width=".8"/></svg>
<div class="fl" style="left:407px;top:726px">Videos</div>
<div class="t" style="left:246px;top:950px;color:#8a8a86;font-size:13px">8 folders, Free space: 210,4 GiB</div>
<!-- ============ Window Manager ============ -->
<div class="a" style="left:718px;top:155px;width:1161px;height:767px;background:#fbfbf9;border:1px solid #f0f0ec;box-shadow:0 0 0 1px rgba(0,0,0,.25)"></div>
<div class="a" style="left:722px;top:158px;width:1153px;height:46px;background:#eaeae6"></div>
<svg class="i" style="left:729px;top:170px" width="22" height="22" viewBox="0 0 22 22"><defs><linearGradient id="pg" x1="0" y1="0" x2="0" y2="1"><stop offset="0" stop-color="#dc3f9c"/><stop offset="1" stop-color="#9b45c2"/></linearGradient></defs><rect x="0.75" y="0.75" width="20.5" height="20.5" rx="5" fill="url(#pg)" stroke="#3c1446" stroke-width="1.5"/><rect x="4" y="4.8" width="8.8" height="7" fill="#fff" stroke="#3c1446" stroke-width=".7"/><rect x="8.8" y="8.2" width="9" height="7" fill="#f4eef6" stroke="#3c1446" stroke-width=".9"/></svg>
<div class="t" style="left:1243px;top:173px;font-weight:bold;font-size:13.4px;color:#222">Window Manager</div>
<div class="a" style="left:1768px;top:183px;width:8px;height:1.2px;background:#333"></div>
<div class="a" style="left:1808px;top:177px;width:9px;height:9px;border:1.5px solid #222"></div>
<svg class="i" style="left:1847px;top:176px" width="10" height="10" viewBox="0 0 10 10"><path d="M1 1 L9 9 M9 1 L1 9" stroke="#222" stroke-width="1.3"/></svg>
<div class="a" style="left:722px;top:204px;width:1153px;height:715px;border:1px solid #5e5e5a;background:#fcfcfa"></div>
<div class="a" style="left:731px;top:213px;width:1135px;height:663px;border:1px solid #6a6a66;background:#fff"></div>
<div class="a" style="left:732px;top:214px;width:1133px;height:36px;background:#e8e8e4;border-bottom:1px solid #7a7a76"></div>
<div class="a" style="left:740px;top:247px;width:54px;height:3px;background:#1f6fd6"></div>
<div class="t" style="left:752px;top:224px;font-size:13.4px;color:#222"><span class="u">S</span>tyle</div>
<div class="t" style="left:814px;top:224px;font-size:13.4px;color:#222"><span class="u">K</span>eyboard</div>
<div class="t" style="left:904px;top:224px;font-size:13.4px;color:#222"><span class="u">F</span>ocus</div>
<div class="t" style="left:971px;top:224px;font-size:13.4px;color:#222">Ad<span class="u">v</span>anced</div>
<div class="t lbl" style="left:744px;top:263px">The<span class="u">m</span>e</div>
<div class="a" style="left:756px;top:285px;width:487px;height:578px;border:1px solid #6a6a66;background:#fff"></div>
<div class="row" style="top:286px">Default</div>
<div class="row sel" style="top:308px">Daloa</div>
<div class="row" style="top:330px">Default-hdpi</div>
<div class="row" style="top:352px">Default-xhdpi</div>
<div class="row" style="top:374px">Kokodi</div>
<div class="row" style="top:396px">Mint-X</div>
<div class="row" style="top:418px">Mint-X-compact</div>
<div class="row" style="top:440px">Mint-Y</div>
<div class="row" style="top:462px">Mint-Y-Aqua</div>
<div class="row" style="top:484px">Mint-Y-Blue</div>
<div class="row" style="top:506px">Mint-Y-Brown</div>
<div class="row" style="top:528px">Mint-Y-Dark</div>
<div class="row" style="top:550px">Mint-Y-Dark-Aqua</div>
<div class="row" style="top:572px">Mint-Y-Dark-Blue</div>
<div class="row" style="top:594px">Mint-Y-Dark-Brown</div>
<div class="row" style="top:616px">Mint-Y-Dark-Grey</div>
<div class="row" style="top:638px">Mint-Y-Dark-Orange</div>
<div class="row" style="top:660px">Mint-Y-Dark-Pink</div>
<div class="row" style="top:682px">Mint-Y-Dark-Purple</div>
<div class="row" style="top:704px">Mint-Y-Dark-Red</div>
<div class="row" style="top:726px">Mint-Y-Dark-Sand</div>
<div class="row" style="top:748px">Mint-Y-Dark-Teal</div>
<div class="row" style="top:770px">Mint-Y-Grey</div>
<div class="row" style="top:792px">Mint-Y-Orange</div>
<div class="row" style="top:814px">Mint-Y-Pink</div>
<div class="row" style="top:836px">Mint-Y-Purple</div>
<div class="t lbl" style="left:1255px;top:263px">Title fon<span class="u">t</span></div>
<div class="btn" style="left:1273px;top:285px;width:574px;height:34px"></div>
<div class="t" style="left:1497px;top:294px;font-size:13.6px">Ubuntu Medium</div>
<div class="t" style="left:1817px;top:294px;font-size:13.4px;font-weight:bold">10</div>
<div class="t lbl" style="left:1255px;top:337px">Title <span class="u">a</span>lignment</div>
<div class="btn" style="left:1273px;top:359px;width:574px;height:34px"></div>
<div class="t" style="left:1285px;top:368px;font-size:13.4px">Center</div>
<svg class="i" style="left:1821px;top:372px" width="14" height="8" viewBox="0 0 14 8"><path d="M0 0 H14 L7 7 Z" fill="#222"/></svg>
<div class="t lbl" style="left:1255px;top:411px">Button layout</div>
<div class="t" style="left:1273px;top:433px;font-size:13.6px">Click and drag the buttons to change the layout</div>
<div class="frame" style="left:1273px;top:463px;width:574px;height:56px"></div>
<div class="a" style="left:1274px;top:462px;width:37px;height:3px;background:#fff"></div>
<div class="t" style="left:1273px;top:455px;font-size:13.4px">Active</div>
<div class="btn" style="left:1280px;top:478px;width:36px;height:34px"></div>
<svg class="i" style="left:1294px;top:491px" width="8" height="7" viewBox="0 0 8 7"><path d="M0.5 0.5 H7.5 L4 6.5 Z" fill="#111"/></svg>
<div class="btn" style="left:1322px;top:478px;width:392px;height:34px"></div>
<div class="t" style="left:1505px;top:487px;font-size:13.6px">Title</div>
<div class="btn" style="left:1720px;top:478px;width:36px;height:34px"></div>
<div class="a" style="left:1735px;top:497px;width:7px;height:2.5px;background:#111"></div>
<div class="btn" style="left:1762px;top:478px;width:36px;height:34px"></div>
<div class="a" style="left:1776px;top:492px;width:8px;height:7px;border:1.5px solid #111;border-top-width:2.5px"></div>
<div class="btn" style="left:1804px;top:478px;width:36px;height:34px"></div>
<svg class="i" style="left:1817px;top:491px" width="10" height="10" viewBox="0 0 10 10"><path d="M1 1 L9 9 M9 1 L1 9" stroke="#111" stroke-width="2"/></svg>
<div class="frame" style="left:1273px;top:533px;width:574px;height:56px"></div>
<div class="a" style="left:1274px;top:532px;width:43px;height:3px;background:#fff"></div>
<div class="t" style="left:1273px;top:525px;font-size:13.4px">Hidden</div>
<div class="btn" style="left:1280px;top:548px;width:36px;height:34px"></div>
<div class="a" style="left:1294px;top:561px;width:8px;height:8px;border:2px solid #111;border-radius:50%"></div>
<div class="btn" style="left:1322px;top:548px;width:36px;height:34px"></div>
<svg class="i" style="left:1335px;top:560px" width="10" height="10" viewBox="0 0 10 10"><path d="M5 10 V2 M1.5 5 L5 1.5 L8.5 5" fill="none" stroke="#111" stroke-width="1.8"/></svg>
<svg class="i" style="left:1192px;top:421px" width="20" height="19" viewBox="0 0 20 19"><rect x="1.6" y="1.6" width="2.8" height="15.6" rx="1" fill="#fff" stroke="#111" stroke-width="1.3"/><path d="M4.6 9.5 L10.4 2 V7.4 H18.3 V11.5 H10.4 V17.2 Z" fill="#fff" stroke="#111" stroke-width="1.3" stroke-linejoin="round"/></svg>
<div class="btn" style="left:725px;top:882px;width:97px;height:34px">Help</div>
<div class="btn" style="left:1672px;top:882px;width:97px;height:34px">All Settings</div>
<div class="btn" style="left:1775px;top:882px;width:97px;height:34px">Close</div>
<!-- ============ Panel ============ -->
<div class="a" style="left:0;top:1047px;width:1920px;height:33px;background:#fbfbf8"></div>
<svg class="i" style="left:4px;top:1051px" width="25" height="25" viewBox="0 0 25 25">
<circle cx="12.5" cy="12.5" r="11.3" fill="none" stroke="#111" stroke-width="2.2"/>
<path d="M6.5 7 V14.5 A3.5 3.5 0 0 0 10 18 H15 A3.5 3.5 0 0 0 18.5 14.5 V10.5 A2.5 2.5 0 0 0 13.5 10.5 V15.5 M13.5 10.5 A2.5 2.5 0 0 0 8.8 10.5 V15.5" fill="none" stroke="#111" stroke-width="1.8"/>
</svg>
<svg class="i" style="left:37px;top:1054px" width="22" height="19" viewBox="0 0 22 19"><rect x="0.5" y="0.5" width="21" height="18" rx="1" fill="#8fb35a" stroke="#5f7f33"/><rect x="0.5" y="0.5" width="21" height="4" fill="#74963f"/></svg>
<svg class="i" style="left:69px;top:1053px" width="22" height="22" viewBox="0 0 22 22"><rect x="0.5" y="0.5" width="21" height="21" rx="4" fill="#f0762e" stroke="#b24a14" stroke-width=".8"/><circle cx="11" cy="11.5" r="6" fill="#fff"/><circle cx="12" cy="11" r="2.6" fill="#f0762e"/><path d="M8 4.5 Q12 3 15 6 L11 8 Z" fill="#f0762e"/></svg>
<svg class="i" style="left:101px;top:1053px" width="22" height="22" viewBox="0 0 22 22"><rect x="0.5" y="0.5" width="21" height="21" rx="4" fill="#2a2a2a" stroke="#111"/><text x="3" y="9" fill="#fff" font-family="Liberation Mono" font-size="7" font-weight="bold">$_</text></svg>
<svg class="i" style="left:133px;top:1053px" width="23" height="20" viewBox="0 0 23 20"><path d="M2 5 V1 H10 V3 H21 V5" fill="#fff" stroke="#c6c6c2" stroke-width=".8"/><rect x="0.5" y="4.5" width="22" height="15" rx="1.5" fill="#8fb35a" stroke="#6b8f3b"/></svg>
<div class="a" style="left:160px;top:1048px;width:199px;height:34px;border:1px solid #8c8a80;border-radius:4px;background:#fdfdfb"></div>
<svg class="i" style="left:164px;top:1056px" width="17" height="15" viewBox="0 0 17 15"><rect x="1.5" y="0.5" width="7" height="3" fill="#fff" stroke="#a0a09c" stroke-width=".6"/><rect x="1.5" y="1.8" width="14" height="3" fill="#fff" stroke="#a0a09c" stroke-width=".6"/><rect x="0.5" y="3.5" width="16" height="11" rx="1" fill="#8fb35a" stroke="#6b8f3b"/><path d="M5.5 12.5 V9 L8.5 6.5 L11.5 9 V12.5 Z" fill="none" stroke="#4f7a25" stroke-width="1"/></svg>
<div class="t" style="left:189px;top:1056px;font-size:13.6px;color:#222">chimbal</div>
<div class="a" style="left:360px;top:1048px;width:199px;height:34px;border:1px solid #8c8a80;border-radius:4px;background:#e4e4e0"></div>
<svg class="i" style="left:364px;top:1056px" width="16" height="16" viewBox="0 0 16 16"><defs><linearGradient id="pg2" x1="0" y1="0" x2="0" y2="1"><stop offset="0" stop-color="#c63fa6"/><stop offset="1" stop-color="#8e48b8"/></linearGradient></defs><rect x="0.5" y="0.5" width="15" height="15" rx="3" fill="url(#pg2)" stroke="#3c1446" stroke-width="1"/><rect x="3" y="3.5" width="6.5" height="5" fill="#fff" stroke="#3c1446" stroke-width=".6"/><rect x="6.5" y="6" width="6.5" height="5.5" fill="#f4eef6" stroke="#3c1446" stroke-width=".7"/></svg>
<div class="t" style="left:389px;top:1056px;font-size:13.6px;color:#222">Window Manager</div>
<!-- tray -->
<svg class="i" style="left:1694px;top:1053px" width="18" height="22" viewBox="0 0 18 22"><path d="M9 1 C4.5 1 3.5 5 3.5 9 V13 L0.5 17 V18 H17.5 V17 L14.5 13 V9 C14.5 5 13.5 1 9 1 Z" fill="#2d2d2d"/><path d="M6.5 19.5 A2.5 2 0 0 0 11.5 19.5 Z" fill="#2d2d2d"/></svg>
<svg class="i" style="left:1725px;top:1052px" width="21" height="24" viewBox="0 0 21 24"><rect x="1.6" y="4.2" width="17.8" height="18.2" rx="1.5" fill="none" stroke="#2d2d2d" stroke-width="2.7"/><rect x="7" y="1" width="7" height="5" rx="2" fill="#fbfbf8" stroke="#2d2d2d" stroke-width="2"/><rect x="9.3" y="8.5" width="2.4" height="6.5" fill="#2d2d2d"/><rect x="9.3" y="16.5" width="2.4" height="2.4" fill="#2d2d2d"/></svg>
<svg class="i" style="left:1755px;top:1052px" width="26" height="25" viewBox="0 0 26 25"><path d="M12 0.8 L24 4.5 C24 13 20.5 19.5 12 23.5 C3.5 19.5 0 13 0 4.5 Z" fill="#2d2d2d"/><path d="M12 3.6 L21.2 6.4 C21 12.8 18.2 17.8 12 20.8 C5.8 17.8 3 12.8 2.8 6.4 Z" fill="none" stroke="#f4f4f2" stroke-width="1.1"/><path d="M12.6 4.8 L20.2 7.1 C19.9 12.5 17.5 16.7 12.6 19.3 Z" fill="#b4b4b4"/><circle cx="20.5" cy="19.3" r="4.3" fill="#f27a0c" stroke="#fbfbf8" stroke-width="1"/></svg>
<svg class="i" style="left:1789px;top:1054px" width="23" height="20" viewBox="0 0 23 20"><path d="M1.5 6 A14 14 0 0 1 21.5 6" fill="none" stroke="#bdbdbd" stroke-width="2.2"/><path d="M4.5 10 A10 10 0 0 1 18.5 10" fill="none" stroke="#2d2d2d" stroke-width="2.2"/><path d="M7.5 13.5 A5.5 5.5 0 0 1 15.5 13.5" fill="none" stroke="#2d2d2d" stroke-width="2.2"/><path d="M8.5 16.5 L11.5 19.5 L14.5 16.5 A4 4 0 0 0 8.5 16.5 Z" fill="#2d2d2d"/></svg>
<svg class="i" style="left:1822px;top:1053px" width="22" height="22" viewBox="0 0 22 22"><circle cx="11" cy="11" r="10.5" fill="#2d2d2d"/><path d="M13 3.5 L7 12 H10.5 L9 18.5 L15 10 H11.5 Z" fill="#fbfbf8"/></svg>
<svg class="i" style="left:1853px;top:1053px" width="23" height="22" viewBox="0 0 23 22"><path d="M0.5 7 H4.5 L10 2 V20 L4.5 15 H0.5 Z" fill="#2d2d2d"/><path d="M13 7.5 A4 4 0 0 1 13 14.5 M15.5 4.5 A8 8 0 0 1 15.5 17.5 M18.5 1.5 A12 12 0 0 1 18.5 20.5" fill="none" stroke="#2d2d2d" stroke-width="2"/></svg>
<div class="t" style="left:1883px;top:1056px;font-size:13.4px;color:#2d2d2d">21:07</div>

</body></html>
